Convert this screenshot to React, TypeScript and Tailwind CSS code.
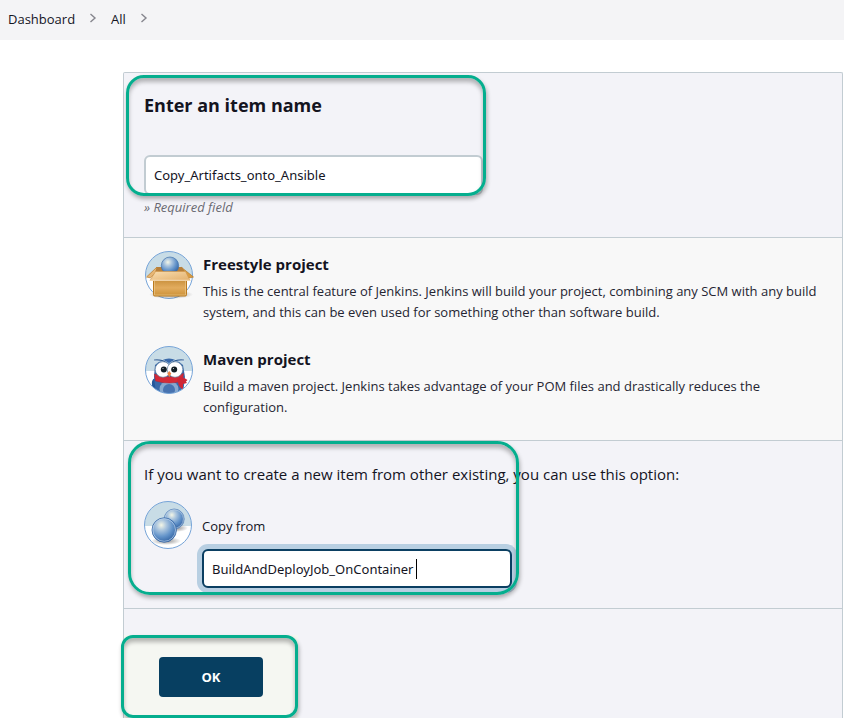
import { useState } from "react";
import type { ReactNode } from "react";

function Chevron() {
  return (
    <svg className="mb-1" width="8" height="12" viewBox="0 0 8 12" fill="none" stroke="#85858d" strokeWidth="1.4" aria-hidden="true">
      <path d="M1.5 2 6 6 1.5 10" />
    </svg>
  );
}

function Disc({ id, children }: { id: string; children: ReactNode }) {
  return (
    <svg className="size-12 shrink-0 overflow-visible" viewBox="0 0 48 48" aria-hidden="true">
      <defs>
        <clipPath id={`${id}-clip`}>
          <circle cx="24" cy="24" r="23.4" />
        </clipPath>
        <radialGradient id={`${id}-orb`} cx="0.38" cy="0.3" r="0.72">
          <stop offset="0" stopColor="#f4f6e6" />
          <stop offset="0.3" stopColor="#abc5de" />
          <stop offset="0.65" stopColor="#6494ca" />
          <stop offset="1" stopColor="#3465a4" />
        </radialGradient>
        <radialGradient id={`${id}-shadow`}>
          <stop offset="0" stopColor="#444" stopOpacity="0.6" />
          <stop offset="1" stopColor="#444" stopOpacity="0" />
        </radialGradient>
        <linearGradient id={`${id}-card`} x1="0" y1="0" x2="0" y2="1">
          <stop offset="0" stopColor="#c88f3b" />
          <stop offset="0.5" stopColor="#e2ac5e" />
          <stop offset="1" stopColor="#cc9137" />
        </linearGradient>
        <linearGradient id={`${id}-flap`} x1="0" y1="0" x2="1" y2="1">
          <stop offset="0" stopColor="#f8ddb0" />
          <stop offset="1" stopColor="#e3b06c" />
        </linearGradient>
      </defs>
      <circle cx="24" cy="24" r="23.5" fill="#fff" />
      <g clipPath={`url(#${id}-clip)`}>
        <path fill="#c8dce6" d="M0 0h48v25H0z" />
      </g>
      {children}
    </svg>
  );
}

function Ring() {
  return <circle cx="24" cy="24" r="23.5" fill="none" stroke="#76a4d8" />;
}

function BoxIcon() {
  return (
    <Disc id="box">
      <Ring />
      <ellipse cx="26" cy="43.5" rx="22" ry="4.5" fill="url(#box-shadow)" />
      <path d="M12 16 1.5 26l4 .8L12 20z" fill="#e7b675" stroke="#b87a25" strokeWidth="0.7" />
      <path d="m36 16 12.5 10-4.5 1-8-7z" fill="#d99c43" stroke="#b87a25" strokeWidth="0.7" />
      <path d="M12 16h25l3 5H10z" fill="#b7803b" />
      <circle cx="25" cy="14.7" r="8.7" fill="url(#box-orb)" stroke="#4472aa" strokeWidth="0.7" />
      <path d="M8.5 28.5h33v15.2q0 1.3-1.3 1.3H9.8q-1.3 0-1.3-1.3z" fill="url(#box-card)" stroke="#ba7a1e" />
      <path d="M9.5 30v14h31V30" fill="none" stroke="#f2d6a3" strokeWidth="0.5" />
      <path d="M10.5 20.5h30l4.5 9H5z" fill="url(#box-flap)" stroke="#d39a4d" strokeWidth="0.7" />
      <path d="M5 29.3h40" stroke="#fff0d4" strokeWidth="0.8" />
    </Disc>
  );
}

function OwlIcon() {
  return (
    <Disc id="owl">
      <g clipPath="url(#owl-clip)">
        <ellipse cx="11.5" cy="39" rx="4.5" ry="7" transform="rotate(-15 11.5 39)" fill="#24569b" />
        <path d="M10 19q14-13 28 0l2 12-2 17H11L9 31z" fill="#3969a9" />
        <ellipse cx="24" cy="43" rx="9.5" ry="8" fill="#87a9cf" />
        <ellipse cx="24" cy="44" rx="6" ry="6" fill="#4773b0" />
        <path d="M13 19q11-6 22 0l-11 3z" fill="#4f83be" />
        <path d="M9 14.2q9-1 14 4M39 14.2q-9-1-14 4" fill="none" stroke="#f1f8fc" strokeWidth="2" />
        <path d="M9 14q9-1 14 4M39 14q-9-1-14 4" fill="none" stroke="#315f95" strokeWidth="1.2" />
        <path d="M9.5 28q14.5 6 29-.5l-1 7.5q-13 4-27 0z" fill="#d52b38" stroke="#b92230" strokeWidth="0.5" />
        <path d="m32 33 5-2 5 6-4 1 0 6-4-4z" fill="#ce2736" />
      </g>
      <circle cx="18" cy="23.5" r="7.8" fill="#fff" stroke="#60809f" strokeWidth="0.7" />
      <circle cx="30" cy="23.5" r="7.8" fill="#fff" stroke="#60809f" strokeWidth="0.7" />
      <circle cx="18.8" cy="23.5" r="3" fill="#142026" />
      <circle cx="29.2" cy="23.5" r="3" fill="#142026" />
      <circle cx="18" cy="22.5" r="0.5" fill="#fff" />
      <circle cx="28.4" cy="22.5" r="0.5" fill="#fff" />
      <path d="m24.2 25 2.1 2.5-2 3.8-2-3.8z" fill="#ee8342" />
      <path d="M37 33.5q1-1 1.5-2l4 2.5-3 3z" fill="#ce2736" />
      <Ring />
    </Disc>
  );
}

function OrbsIcon() {
  return (
    <Disc id="orbs">
      <ellipse cx="32" cy="27" rx="12" ry="4" fill="url(#orbs-shadow)" />
      <circle cx="30.2" cy="18" r="10" fill="url(#orbs-orb)" stroke="#5c87bb" strokeWidth="0.8" />
      <circle cx="30.2" cy="18" r="9.2" fill="none" stroke="#c7d9ea" strokeWidth="0.6" />
      <ellipse cx="22" cy="40" rx="15" ry="4" fill="url(#orbs-shadow)" />
      <circle cx="20.2" cy="29" r="12.2" fill="url(#orbs-orb)" stroke="#3465a4" strokeWidth="0.8" />
      <circle cx="20.2" cy="29" r="11.3" fill="none" stroke="#bdd3eb" strokeWidth="0.7" />
      <Ring />
    </Disc>
  );
}

function ProjectType({ icon, title, children }: { icon: ReactNode; title: string; children: ReactNode }) {
  return (
    <li className="flex gap-[10px]">
      {icon}
      <div className="pt-[3px]">
        <h2 className="text-[15px] leading-5 font-bold">{title}</h2>
        <p className="mt-[7px] text-[13px] leading-[21px] text-[#252532]">{children}</p>
      </div>
    </li>
  );
}

const highlight =
  "pointer-events-none absolute border-3 border-[#05ae8e] shadow-[1px_3px_4px_rgba(0,0,0,0.3),inset_0_4px_4px_rgba(0,0,0,0.27)]";

export default function App() {
  const [name, setName] = useState("Copy_Artifacts_onto_Ansible");
  const [source, setSource] = useState("BuildAndDeployJob_OnContainer");
  return (
    <div className="bg-white font-['Open_Sans','Noto_Sans',sans-serif] text-[#14141f]">
      <nav aria-label="Breadcrumb" className="flex h-10 items-center gap-3.5 bg-[#f4f4f6] px-2 text-[13px]">
        <a href="#dashboard">Dashboard</a>
        <Chevron />
        <a href="#all">All</a>
        <Chevron />
      </nav>
      <main className="pt-8 pr-px pl-[123px]">
        <form className="rounded-t-xs border border-b-0 border-[#c2ccd2] bg-[#f3f3f8]" onSubmit={(e) => e.preventDefault()}>
          <section className="relative px-5 pt-5 pb-5">
            <label htmlFor="name" className="block text-lg leading-6 font-bold">
              Enter an item name
            </label>
            <input
              id="name"
              value={name}
              onChange={(e) => setName(e.target.value)}
              className="mt-[38px] block h-10 w-[339px] rounded-md border-2 border-[#c2ccd2] bg-white px-2 font-['Noto_Sans',sans-serif] text-[13px] outline-none"
            />
            <p className="mt-0.5 text-[13px] leading-5 text-[#6a6a72] italic">» Required field</p>
            <div className={`${highlight} top-0.5 left-0.5 h-[121px] w-[360px] rounded-[18px]`} />
          </section>
          <section className="border-y border-[#c2ccd2] bg-[#f8f8f8] pt-[13px] pr-4 pb-[22px] pl-[21px]">
            <ul className="flex flex-col gap-[23px]">
              <ProjectType icon={<BoxIcon />} title="Freestyle project">
                This is the central feature of Jenkins. Jenkins will build your project, combining any SCM with any build
                system, and this can be even used for something other than software build.
              </ProjectType>
              <ProjectType icon={<OwlIcon />} title="Maven project">
                Build a maven project. Jenkins takes advantage of your POM files and drastically reduces the
                <br />
                configuration.
              </ProjectType>
            </ul>
          </section>
          <section className="relative border-b border-[#c2ccd2] px-5 pt-[21px] pb-5">
            <p className="text-[15px] leading-6">
              If you want to create a new item from other existing, you can use this option:
            </p>
            <div className="mt-[15px] flex gap-[10px]">
              <OrbsIcon />
              <div className="pt-[15px]">
                <label htmlFor="from" className="block text-[13px] leading-5">
                  Copy from
                </label>
                <div className="relative mt-[13px]">
                  <input
                    id="from"
                    value={source}
                    onChange={(e) => setSource(e.target.value)}
                    className="block h-[39px] w-[310px] rounded-md border-2 border-[#0b3f62] bg-white px-2 font-['Noto_Sans',sans-serif] text-[13px] ring-5 ring-[#b8cfe2] outline-none"
                  />
                  <span className="absolute top-[10px] left-[214px] h-5 w-px bg-black" />
                </div>
              </div>
            </div>
            <div className={`${highlight} top-0 left-1 h-[154px] w-[391px] rounded-[22px]`} />
          </section>
          <section className="pt-[26px]">
            <div className="relative w-[174px] bg-[#f5f7f2] px-[35px] pt-[22px] pb-[21px]">
              <button type="submit" className="block h-10 w-[104px] rounded-sm bg-[#073f61] pt-0.5 text-[13px] font-bold text-white">
                OK
              </button>
              <div className={`${highlight} top-0 -left-[3px] h-[83px] w-[177px] rounded-[12px]`} />
            </div>
          </section>
        </form>
      </main>
    </div>
  );
}
